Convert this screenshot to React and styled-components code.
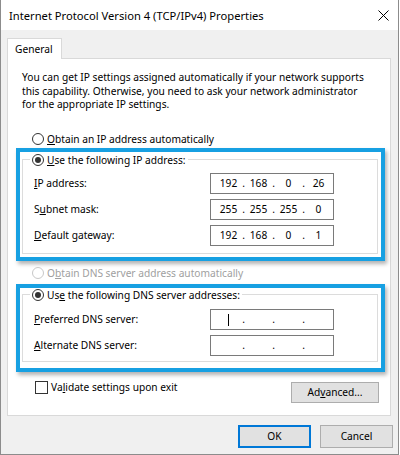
import React from "react";
import styled, { createGlobalStyle } from "styled-components";

const GlobalStyle = createGlobalStyle`
  html, body {
    margin: 0;
    padding: 0;
    background: #ffffff;
  }
  body {
    font-family: "Noto Sans", "Segoe UI", sans-serif;
    font-size: 10.2px;
    color: #000000;
  }
`;

const Window = styled.div`
  width: 397px;
  height: 454px;
  border: 1px solid #8c8c8c;
  border-top: none;
  display: flex;
  flex-direction: column;
  background: #f0f0f0;
`;

const TitleBar = styled.div`
  flex-shrink: 0;
  height: 30px;
  background: #ffffff;
  display: flex;
  align-items: center;
  justify-content: space-between;
  padding: 0 9px 0 8px;
`;

const Title = styled.span`
  font-size: 11.2px;
`;

const Body = styled.div`
  flex: 1;
  display: flex;
  flex-direction: column;
  padding: 8px 5px 0 6px;
`;

const Tab = styled.div`
  align-self: flex-start;
  position: relative;
  z-index: 1;
  height: 20px;
  line-height: 20px;
  padding: 0 8px 0 7px;
  background: #ffffff;
  border: 1px solid #d9d9d9;
  border-bottom: none;
  margin-bottom: -1px;
`;

const Panel = styled.div`
  background: #ffffff;
  border: 1px solid #d9d9d9;
  margin-right: 2px;
  padding: 0 5px 12px 8px;
`;

const Intro = styled.p`
  margin: 12px 0 0 6px;
  line-height: 13.5px;
  white-space: nowrap;
`;

const Option = styled.div`
  display: flex;
  align-items: center;
  gap: 3px;
  height: 14px;
  margin: ${(p) => p.$mt || 0}px 0 0 16px;
  color: ${(p) => (p.$disabled ? "#a0a0a0" : "#000000")};
`;

const Radio = styled.span`
  width: 10px;
  height: 10px;
  border-radius: 50%;
  border: 1px solid ${(p) => (p.$disabled ? "#c8c8c8" : "#333333")};
  background: #ffffff;
  display: inline-flex;
  align-items: center;
  justify-content: center;
  flex-shrink: 0;

  &::after {
    content: "";
    width: 6px;
    height: 6px;
    border-radius: 50%;
    background: ${(p) => (p.$checked ? "#333333" : "transparent")};
  }
`;

const Key = styled.span`
  text-decoration: underline;
  text-underline-offset: 1px;
`;

const Highlight = styled.div`
  border: 4px solid #17a0e2;
  margin-top: ${(p) => p.$mt}px;
  padding: ${(p) => p.$pt}px 3px ${(p) => p.$pb}px 2px;
  box-shadow: 2px 3px 4px rgba(0, 0, 0, 0.3);
`;

const GroupBox = styled.fieldset`
  margin: 0;
  padding: 0;
  min-width: 0;
  border: 1px solid #dcdcdc;
`;

const Legend = styled.legend`
  display: flex;
  align-items: center;
  gap: 3px;
  height: 14px;
  padding: 0 2px;
  margin-left: 7px;
`;

const Rows = styled.div`
  display: flex;
  flex-direction: column;
  gap: 5px;
  padding: ${(p) => p.$pt}px 43px ${(p) => p.$pb}px 11px;
`;

const FieldRow = styled.div`
  display: flex;
  align-items: center;
  justify-content: space-between;
  height: 21px;
`;

const IpBox = styled.div`
  box-sizing: border-box;
  width: 124px;
  height: 21px;
  border: 1px solid #7a7a7a;
  display: flex;
  align-items: center;
  padding-left: 5px;
`;

const Octet = styled.span`
  width: 25px;
  text-align: center;
`;

const Dot = styled.span`
  width: 5px;
  text-align: center;
`;

const Caret = styled.span`
  display: inline-block;
  width: 1px;
  height: 12px;
  background: #000000;
  vertical-align: middle;
`;

const Footer = styled.div`
  display: flex;
  justify-content: space-between;
  align-items: flex-start;
  margin: 9px 6px 0 19px;
`;

const CheckRow = styled.label`
  display: flex;
  align-items: center;
  gap: 3px;
  height: 13px;
`;

const Check = styled.span`
  box-sizing: border-box;
  width: 13px;
  height: 13px;
  border: 1px solid #333333;
  background: #ffffff;
`;

const Button = styled.button`
  box-sizing: border-box;
  width: ${(p) => p.$w}px;
  height: ${(p) => p.$h}px;
  margin-top: ${(p) => p.$mt || 0}px;
  font-family: inherit;
  font-size: 10.2px;
  color: #000000;
  background: #e1e1e1;
  border: ${(p) => (p.$primary ? "2px solid #0078d7" : "1px solid #adadad")};
  padding: 0;
`;

const ButtonRow = styled.div`
  display: flex;
  justify-content: flex-end;
  gap: 9px;
  margin-top: 9px;
`;

const IpField = ({ values, caret }) => (
  <IpBox>
    {values.map((v, i) => (
      <React.Fragment key={i}>
        {i > 0 && <Dot>.</Dot>}
        <Octet>{caret && i === 0 ? <Caret /> : v}</Octet>
      </React.Fragment>
    ))}
  </IpBox>
);

const CloseIcon = () => (
  <svg width="11" height="11" viewBox="0 0 11 11">
    <path d="M0.5 0.5 L10.5 10.5 M10.5 0.5 L0.5 10.5" stroke="#000" strokeWidth="1" fill="none" />
  </svg>
);

export default function App() {
  return (
    <>
      <GlobalStyle />
      <Window>
        <TitleBar>
          <Title>Internet Protocol Version 4 (TCP/IPv4) Properties</Title>
          <CloseIcon />
        </TitleBar>
        <Body>
          <Tab>General</Tab>
          <Panel>
            <Intro>
              You can get IP settings assigned automatically if your network supports
              <br />
              this capability. Otherwise, you need to ask your network administrator
              <br />
              for the appropriate IP settings.
            </Intro>

            <Option $mt={20}>
              <Radio />
              <span>
                <Key>O</Key>btain an IP address automatically
              </span>
            </Option>

            <Highlight $mt={2} $pt={1} $pb={3}>
              <GroupBox>
                <Legend>
                  <Radio $checked />
                  <span>
                    <Key>U</Key>se the following IP address:
                  </span>
                </Legend>
                <Rows $pt={6} $pb={7}>
                  <FieldRow>
                    <span>
                      <Key>I</Key>P address:
                    </span>
                    <IpField values={["192", "168", "0", "26"]} />
                  </FieldRow>
                  <FieldRow>
                    <span>
                      S<Key>u</Key>bnet mask:
                    </span>
                    <IpField values={["255", "255", "255", "0"]} />
                  </FieldRow>
                  <FieldRow>
                    <span>
                      <Key>D</Key>efault gateway:
                    </span>
                    <IpField values={["192", "168", "0", "1"]} />
                  </FieldRow>
                </Rows>
              </GroupBox>
            </Highlight>

            <Option $mt={5} $disabled>
              <Radio $disabled />
              <span>
                O<Key>b</Key>tain DNS server address automatically
              </span>
            </Option>

            <Highlight $mt={4} $pt={0} $pb={6}>
              <GroupBox>
                <Legend>
                  <Radio $checked />
                  <span>
                    Us<Key>e</Key> the following DNS server addresses:
                  </span>
                </Legend>
                <Rows $pt={7} $pb={5}>
                  <FieldRow>
                    <span>
                      <Key>P</Key>referred DNS server:
                    </span>
                    <IpField values={["", "", "", ""]} caret />
                  </FieldRow>
                  <FieldRow>
                    <span>
                      <Key>A</Key>lternate DNS server:
                    </span>
                    <IpField values={["", "", "", ""]} />
                  </FieldRow>
                </Rows>
              </GroupBox>
            </Highlight>

            <Footer>
              <CheckRow>
                <Check />
                <span>
                  Va<Key>l</Key>idate settings upon exit
                </span>
              </CheckRow>
              <Button $w={88} $h={21} $mt={1}>
                Ad<Key>v</Key>anced...
              </Button>
            </Footer>
          </Panel>
          <ButtonRow>
            <Button $w={73} $h={23} $primary>
              OK
            </Button>
            <Button $w={73} $h={23}>
              Cancel
            </Button>
          </ButtonRow>
        </Body>
      </Window>
    </>
  );
}
